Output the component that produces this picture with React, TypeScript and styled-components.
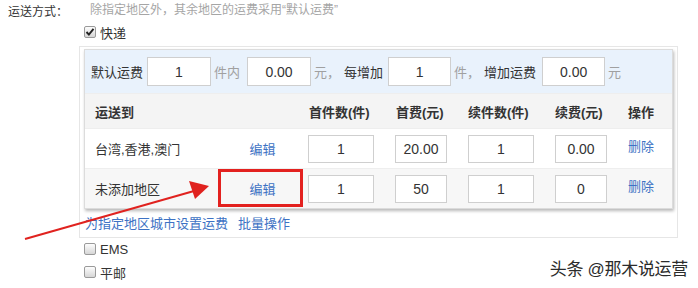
import React from "react";
import styled, { createGlobalStyle } from "styled-components";

const GlobalStyle = createGlobalStyle`
  html, body {
    margin: 0;
    padding: 0;
    background: #fff;
  }
  body {
    font-family: "Liberation Sans", "Noto Sans CJK SC", sans-serif;
    color: #333;
  }
`;

const Page = styled.div`
  position: relative;
  width: 698px;
  height: 288px;
  overflow: hidden;
  font-size: 13px;
`;

const FieldRow = styled.div`
  display: flex;
`;

const FieldLabel = styled.div`
  width: 71px;
  padding: 2px 0 0 8px;
  line-height: 20px;
  font-size: 12px;
  color: #333;
`;

const FieldBody = styled.div`
  width: 600px;
  display: flex;
  flex-direction: column;
`;

const Hint = styled.div`
  padding-left: 11px;
  line-height: 20px;
  font-size: 12px;
  color: #a5a5a5;
`;

const CheckRow = styled.label<{ $top: number }>`
  display: flex;
  align-items: center;
  gap: 4px;
  height: 20px;
  margin-top: ${({ $top }) => $top}px;
  padding-left: 5px;
  font-size: 13px;
  color: #333;
`;

const Box = styled.span`
  display: inline-flex;
  align-items: center;
  justify-content: center;
  width: 12px;
  height: 12px;
  border: 1px solid #9a9a9a;
  border-radius: 2px;
  background: linear-gradient(#fdfdfd, #d6d6d6);
  box-sizing: border-box;
`;

const Check = ({ checked }: { checked?: boolean }) => (
  <Box>
    {checked && (
      <svg width="10" height="10" viewBox="0 0 10 10">
        <path d="M1.5 5 L3.9 7.6 L8.5 1.8" fill="none" stroke="#222" strokeWidth="1.9" />
      </svg>
    )}
  </Box>
);

const DeliveryBox = styled.div`
  margin-top: 4px;
  border: 1px solid #e6e6e6;
  padding: 2px 4px 0 4px;
  width: 599px;
  box-sizing: border-box;
`;

const Panel = styled.div`
  width: 589px;
  border: 1px solid #dcdcdc;
  box-sizing: border-box;
  box-shadow: 1px 2px 3px rgba(0, 0, 0, 0.28);
  background: #fff;
`;

const DefaultBar = styled.div`
  display: flex;
  align-items: center;
  height: 43px;
  padding-left: 6px;
  background: #e9f2fc;
`;

const BarText = styled.span<{ $muted?: boolean; $l: number; $r: number }>`
  color: ${({ $muted }) => ($muted ? "#a0a0a0" : "#333")};
  font-size: 13px;
  margin: 0 ${({ $r }) => $r}px 0 ${({ $l }) => $l}px;
  white-space: nowrap;
`;

const Field = styled.input<{ $w: number; $h?: number }>`
  width: ${({ $w }) => $w}px;
  height: ${({ $h }) => $h ?? 29}px;
  box-sizing: border-box;
  border: 1px solid #cfcfcf;
  background: #fff;
  text-align: center;
  font-family: "Liberation Sans", sans-serif;
  font-size: 14px;
  color: #333;
  padding: 0;
  outline: none;
`;

const Grid = styled.div<{ $bg: string; $h: number }>`
  display: grid;
  grid-template-columns: 133px 90px 87px 73px 87px 73px 1fr;
  align-items: center;
  height: ${({ $h }) => $h}px;
  background: ${({ $bg }) => $bg};
  border-top: 1px solid #eeeeee;
  box-sizing: border-box;
`;

const Head = styled.div<{ $pad?: number }>`
  font-weight: bold;
  font-size: 13px;
  color: #333;
  padding-left: ${({ $pad }) => $pad ?? 0}px;
`;

const Area = styled.div`
  padding-left: 10px;
  font-size: 13px;
  color: #333;
`;

const EditCell = styled.div`
  position: relative;
  height: 100%;
  display: flex;
  align-items: center;
  justify-content: center;
  padding-left: 2px;
  padding-right: 3px;
`;

const Highlight = styled.div`
  position: absolute;
  left: 0;
  top: 0;
  width: 85px;
  height: 38px;
  border: 3px solid #e3211f;
  box-sizing: border-box;
`;

const LinkText = styled.a<{ $gap?: number }>`
  color: #3d72c4;
  font-size: 13px;
  text-decoration: none;
  margin-left: ${({ $gap }) => $gap ?? 0}px;
  cursor: pointer;
`;

const OpCell = styled.div`
  align-self: start;
  padding-top: 7px;
`;

const Links = styled.div`
  display: flex;
  align-items: flex-start;
  height: 28px;
  padding: 4px 0 0 1px;
  box-sizing: border-box;
`;

const Overlay = styled.svg`
  position: absolute;
  left: 0;
  top: 0;
  pointer-events: none;
`;

const Watermark = styled.div`
  position: absolute;
  right: 10px;
  bottom: 8px;
  font-size: 17px;
  color: #2b2b2b;
  text-shadow: 0 0 2px #fff, 0 0 2px #fff;
  letter-spacing: -0.3px;
`;

type Rule = {
  area: string;
  first: string;
  fee: string;
  more: string;
  moreFee: string;
  bg: string;
  marked?: boolean;
};

const rules: Rule[] = [
  { area: "台湾,香港,澳门", first: "1", fee: "20.00", more: "1", moreFee: "0.00", bg: "#ffffff" },
  { area: "未添加地区", first: "1", fee: "50", more: "1", moreFee: "0", bg: "#f7f7f7", marked: true },
];

export default function App() {
  return (
    <Page>
      <GlobalStyle />
      <FieldRow>
        <FieldLabel>运送方式：</FieldLabel>
        <FieldBody>
          <Hint>除指定地区外，其余地区的运费采用“默认运费”</Hint>
          <CheckRow $top={2}>
            <Check checked />
            快递
          </CheckRow>
          <DeliveryBox>
            <Panel>
              <DefaultBar>
                <BarText $l={0} $r={4}>默认运费</BarText>
                <Field $w={64} defaultValue="1" readOnly />
                <BarText $muted $l={3} $r={7}>件内</BarText>
                <Field $w={64} defaultValue="0.00" readOnly />
                <BarText $muted $l={3} $r={4}>元，</BarText>
                <BarText $l={0} $r={5}>每增加</BarText>
                <Field $w={63} defaultValue="1" readOnly />
                <BarText $muted $l={3} $r={4}>件，</BarText>
                <BarText $l={0} $r={6}>增加运费</BarText>
                <Field $w={63} defaultValue="0.00" readOnly />
                <BarText $muted $l={3} $r={0}>元</BarText>
              </DefaultBar>
              <Grid $bg="#f4f4f4" $h={35}>
                <Head $pad={10}>运送到</Head>
                <Head />
                <Head $pad={1}>首件数(件)</Head>
                <Head $pad={1}>首费(元)</Head>
                <Head>续件数(件)</Head>
                <Head>续费(元)</Head>
                <Head>操作</Head>
              </Grid>
              {rules.map((r) => (
                <Grid key={r.area} $bg={r.bg} $h={40}>
                  <Area>{r.area}</Area>
                  <EditCell>
                    <LinkText>编辑</LinkText>
                    {r.marked && <Highlight />}
                  </EditCell>
                  <Field $w={66} $h={28} defaultValue={r.first} readOnly />
                  <Field $w={52} $h={28} defaultValue={r.fee} readOnly />
                  <Field $w={66} $h={28} defaultValue={r.more} readOnly />
                  <Field $w={52} $h={28} defaultValue={r.moreFee} readOnly />
                  <OpCell>
                    <LinkText>删除</LinkText>
                  </OpCell>
                </Grid>
              ))}
            </Panel>
            <Links>
              <LinkText>为指定地区城市设置运费</LinkText>
              <LinkText $gap={10}>批量操作</LinkText>
            </Links>
          </DeliveryBox>
          <CheckRow $top={1}>
            <Check />
            EMS
          </CheckRow>
          <CheckRow $top={3}>
            <Check />
            平邮
          </CheckRow>
        </FieldBody>
      </FieldRow>

      <Overlay width="698" height="288" viewBox="0 0 698 288">
        <line x1="25" y1="239" x2="194" y2="191" stroke="#e0221f" strokeWidth="2" />
        <polygon points="209,186 189,181 195,199" fill="#e0221f" />
      </Overlay>

      <Watermark>头条 @那木说运营</Watermark>
    </Page>
  );
}
